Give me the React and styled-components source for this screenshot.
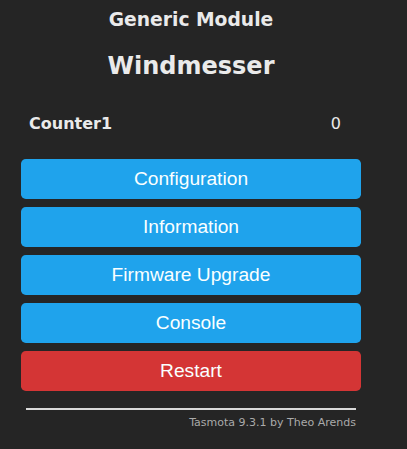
import React from "react";
import styled, { createGlobalStyle } from "styled-components";

const Global = createGlobalStyle`
  html, body { margin: 0; padding: 0; background: #252525; }
  body { color: #eaeaea; font-family: Verdana, "DejaVu Sans", sans-serif; }
`;

const Page = styled.div`
  width: 340px;
  padding-left: 21px;
  padding-top: 9px;
  display: flex;
  flex-direction: column;
`;

const ModuleTitle = styled.h3`
  margin: 0;
  font-size: 18.72px;
  line-height: 22px;
  font-weight: bold;
  text-align: center;
`;

const DeviceTitle = styled.h2`
  margin: 21px 0 0;
  font-size: 24px;
  line-height: 28px;
  font-weight: bold;
  text-align: center;
`;

const SensorRow = styled.div`
  margin-top: 34px;
  display: flex;
  justify-content: space-between;
  padding: 0 20px 0 8px;
  font-size: 16px;
  line-height: 20px;
`;

const SensorName = styled.span`
  font-weight: bold;
`;

const SensorValue = styled.span``;

const Buttons = styled.div`
  margin-top: 25px;
  display: flex;
  flex-direction: column;
  gap: 8px;
`;

const Button = styled.button`
  border: 0;
  border-radius: 4.8px;
  height: 40px;
  width: 100%;
  background: ${(p) => (p.$danger ? "#d43535" : "#1fa3ec")};
  color: #faffff;
  font-family: "Liberation Sans", Arial, sans-serif;
  font-size: 19.2px;
  line-height: 40px;
  padding: 0;
  cursor: pointer;
`;

const Footer = styled.div`
  margin-top: 17px;
  display: flex;
  flex-direction: column;
  align-items: flex-end;
  padding: 0 5px;
`;

const Rule = styled.div`
  width: 330px;
  height: 2px;
  background: #d9d9d9;
`;

const Credits = styled.div`
  margin-top: 6px;
  font-size: 11px;
  line-height: 14px;
  color: #aaa;
`;

export default function App() {
  const buttons = ["Configuration", "Information", "Firmware Upgrade", "Console"];
  return (
    <>
      <Global />
      <Page>
        <ModuleTitle>Generic Module</ModuleTitle>
        <DeviceTitle>Windmesser</DeviceTitle>
        <SensorRow>
          <SensorName>Counter1</SensorName>
          <SensorValue>0</SensorValue>
        </SensorRow>
        <Buttons>
          {buttons.map((b) => (
            <Button key={b}>{b}</Button>
          ))}
          <Button $danger>Restart</Button>
        </Buttons>
        <Footer>
          <Rule />
          <Credits>Tasmota 9.3.1 by Theo Arends</Credits>
        </Footer>
      </Page>
    </>
  );
}
